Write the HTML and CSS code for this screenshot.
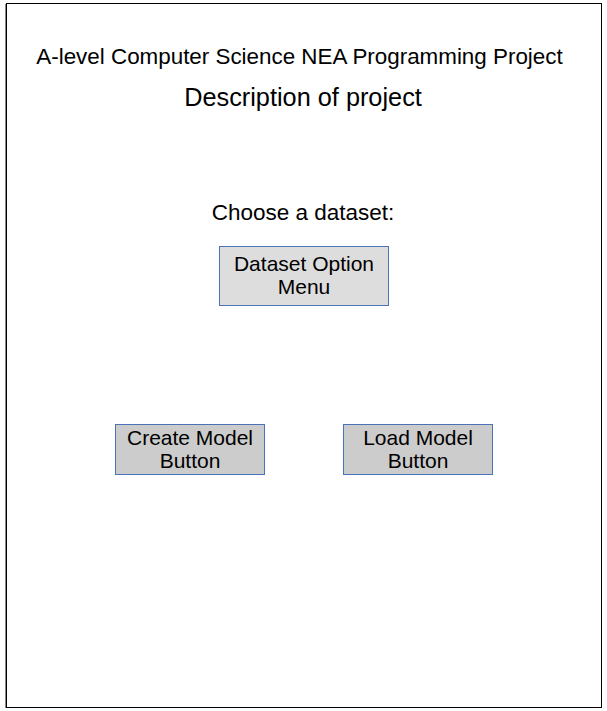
FILE: index.html
```html
<!DOCTYPE html>
<html>
<head>
<meta charset="utf-8">
<link rel="stylesheet" href="styles.css">
</head>
<body>
<div class="frame">
  <div class="title">A-level Computer Science NEA Programming Project</div>
  <div class="subtitle">Description of project</div>
  <div class="prompt">Choose a dataset:</div>
  <div class="box menu">Dataset Option<br>Menu</div>
  <div class="actions">
    <div class="box btn">Create Model<br>Button</div>
    <div class="box btn">Load Model<br>Button</div>
  </div>
</div>
</body>
</html>
```
FILE: styles.css
```css
html, body {
  margin: 0;
  padding: 0;
  background: #ffffff;
}
body {
  font-family: "Liberation Sans", Arial, sans-serif;
  color: #000;
}
.frame {
  box-sizing: border-box;
  margin: 3px 0 0 6px;
  width: 596px;
  height: 705px;
  border: 1px solid #000;
  box-shadow: -1px 1px 0 #888;
  display: flex;
  flex-direction: column;
  align-items: center;
}
.title {
  margin-top: 40px;
  margin-right: 9px;
  font-size: 22.4px;
  line-height: 26px;
}
.subtitle {
  margin-top: 12px;
  margin-right: 2px;
  font-size: 25.3px;
  line-height: 30px;
}
.prompt {
  margin-top: 88px;
  margin-right: 2px;
  font-size: 22.5px;
  line-height: 26px;
}
.box {
  box-sizing: border-box;
  border: 1px solid #4a72b8;
  text-align: center;
  font-size: 21px;
  line-height: 23px;
  padding-bottom: 2px;
  display: flex;
  align-items: center;
  justify-content: center;
}
.menu {
  margin-top: 20px;
  width: 170px;
  height: 60px;
  background: #dddddd;
}
.actions {
  margin-top: 118px;
  display: flex;
  gap: 78px;
}
.btn {
  width: 150px;
  height: 51px;
  background: #cccccc;
}
```
